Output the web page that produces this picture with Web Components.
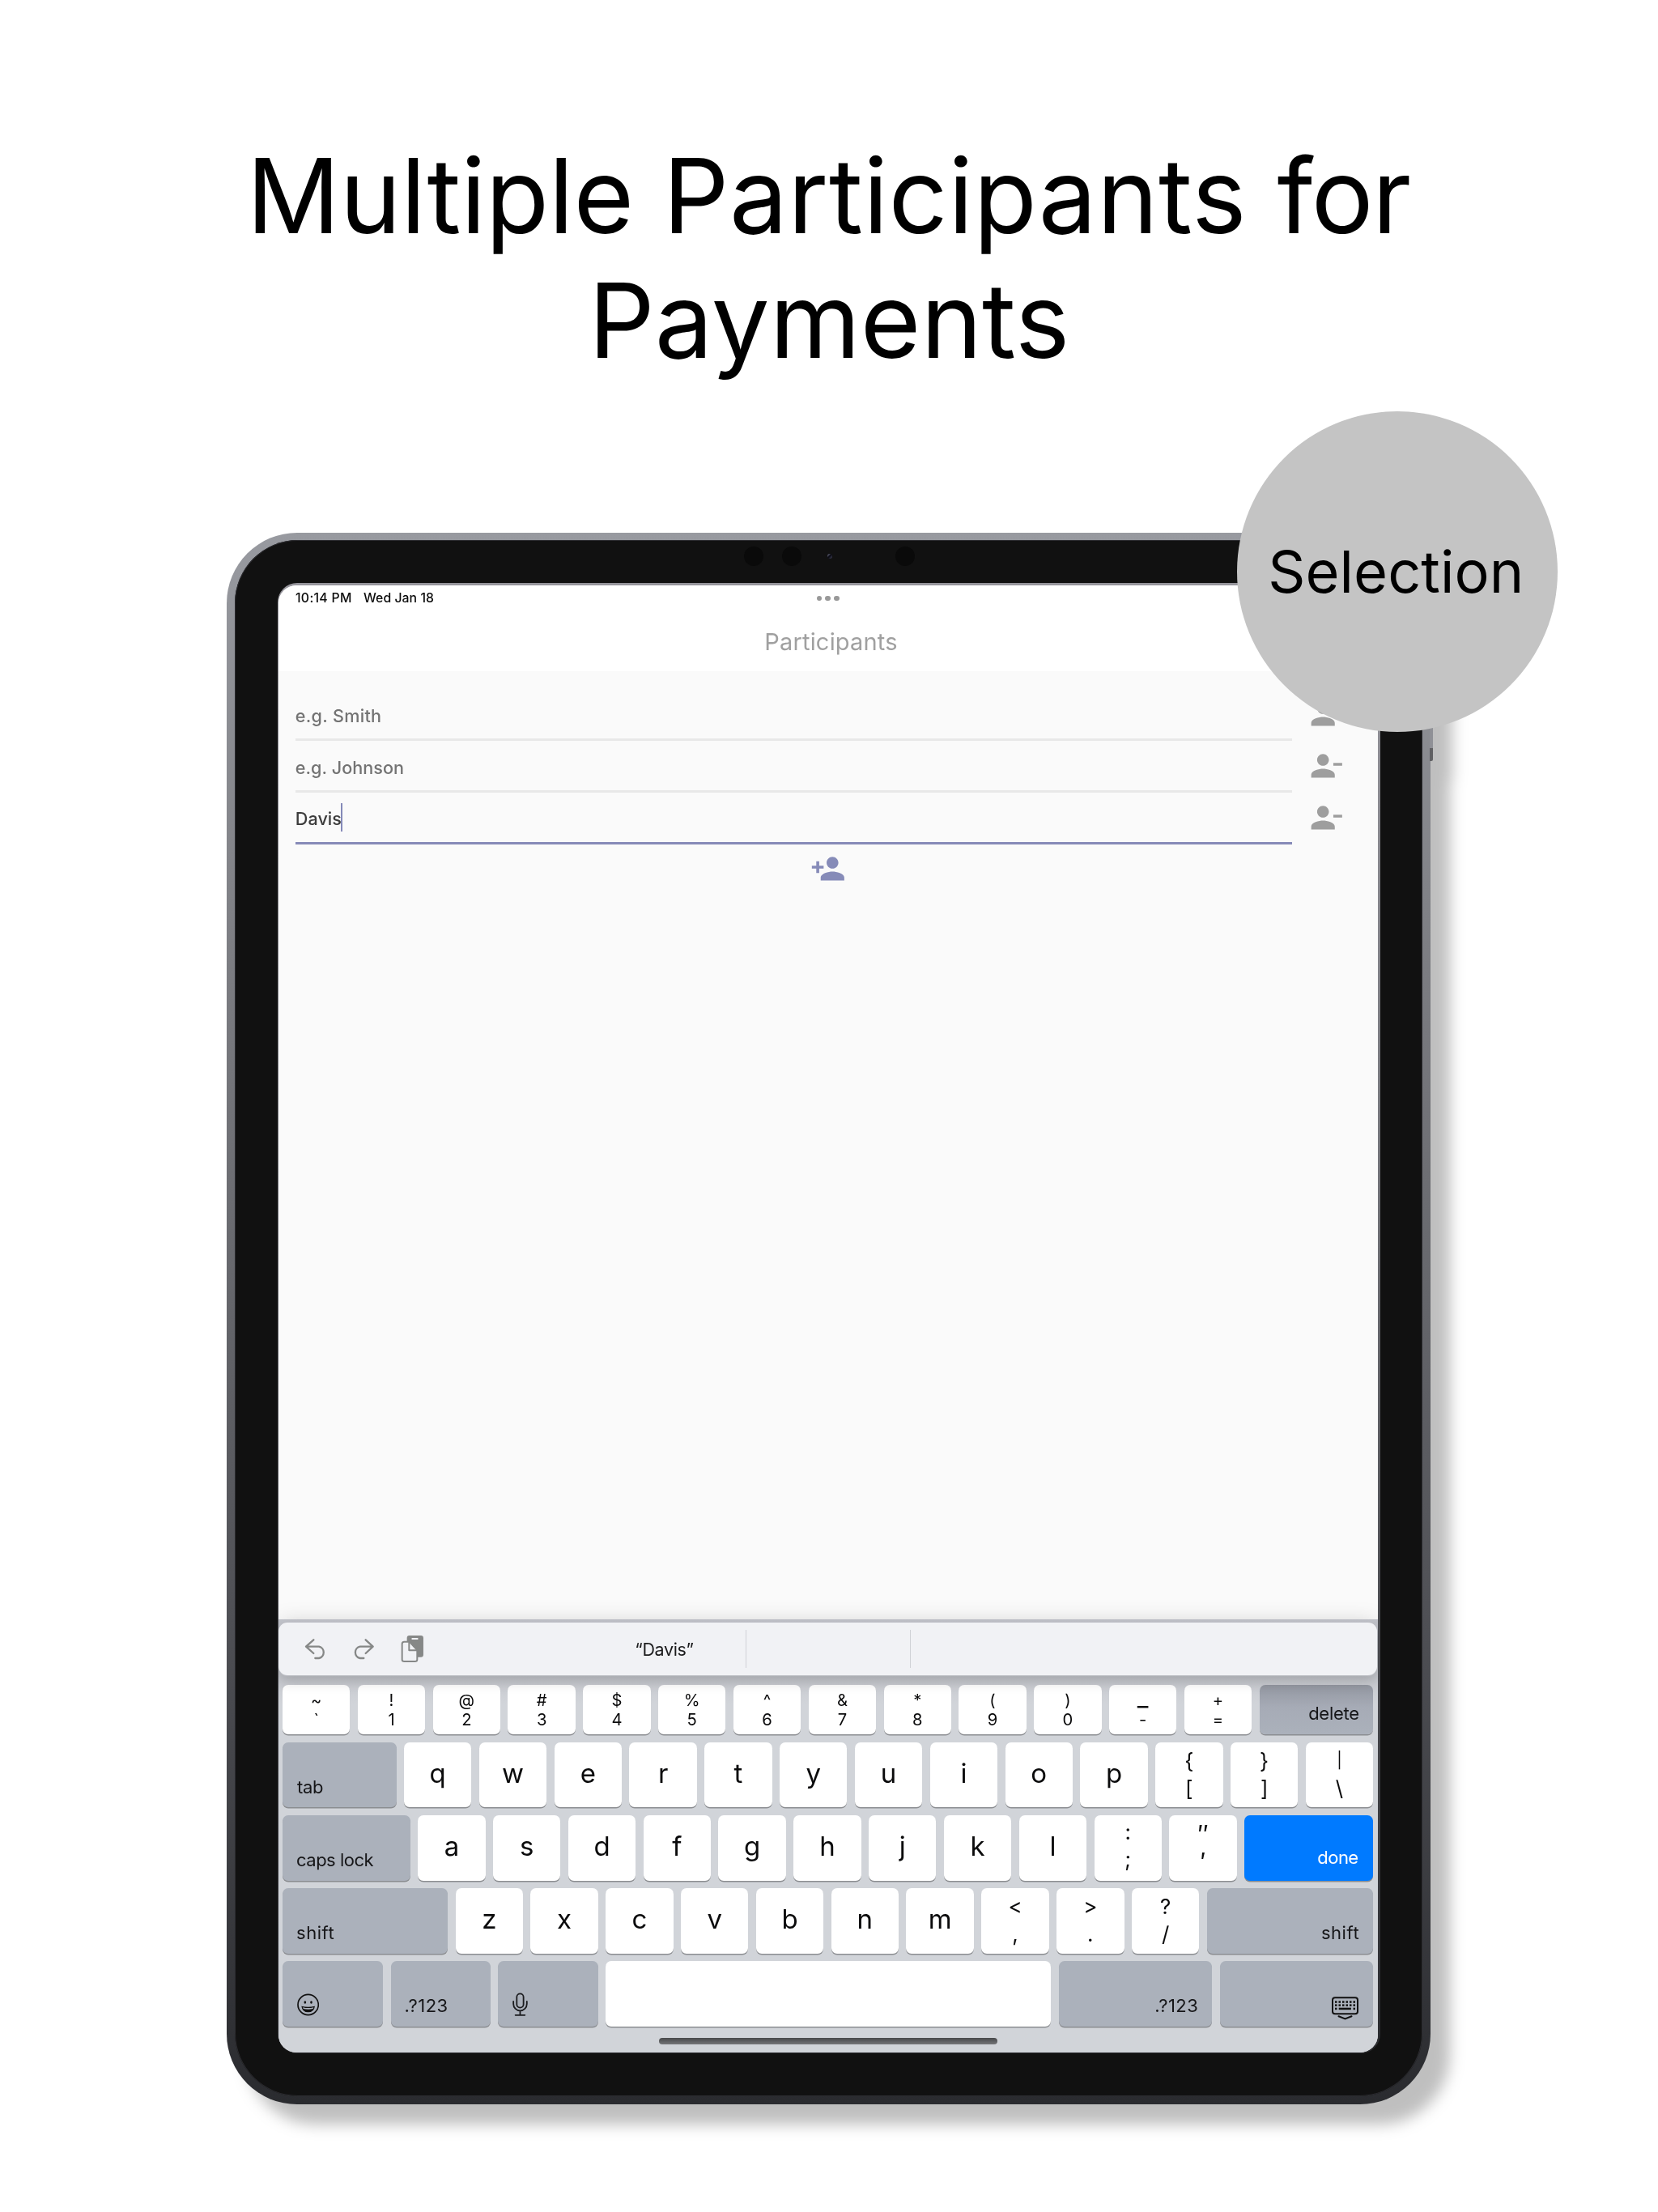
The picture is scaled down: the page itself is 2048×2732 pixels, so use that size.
<!DOCTYPE html>
<html lang="en">
<head>
<meta charset="utf-8">
<title>Multiple Participants for Payments</title>
<style>
html, body { margin: 0; padding: 0; background: #fff; }
body { width: 2048px; height: 2732px; overflow: hidden; font-family: Inter, "Liberation Sans", sans-serif; color: #000; }
</style>
</head>
<body>
<promo-page>
  <promo-title slot="title"></promo-title>
  <tablet-frame>
    <participants-screen></participants-screen>
  </tablet-frame>
  <round-badge slot="badge">Selection</round-badge>
</promo-page>

<script>
const define = (name, html, setup) => customElements.define(name, class extends HTMLElement {
  constructor() {
    super();
    this.attachShadow({ mode: 'open' }).innerHTML = html;
    if (setup) setup(this, this.shadowRoot);
  }
});

define('promo-page', `
  <style>
    :host { display: flex; flex-direction: column; width: 2048px; height: 2732px; position: relative; background: #fff; overflow: hidden; }
    .stage { padding-left: 280px; }
  </style>
  <slot name="title"></slot>
  <div class="stage"><slot></slot></div>
  <slot name="badge"></slot>
`);

define('promo-title', `
  <style>
    :host { display: flex; flex-direction: column; box-sizing: border-box; height: 658px; padding-top: 165px; font-size: 128px; line-height: 154px; white-space: nowrap; }
    .first { padding-left: 304.4px; }
    .second { padding-left: 727px; }
  </style>
  <div class="first"><span style="letter-spacing:-.33px">Multiple</span> <span style="letter-spacing:.42px">Participants</span> <span style="letter-spacing:-1.5px;margin-left:1.6px">for</span></div>
  <div class="second">Payments</div>
`);

define('round-badge', `
  <style>
    :host { position: absolute; left: 1528px; top: 508px; width: 396px; height: 396px; border-radius: 50%; background: #c4c4c4;
      display: flex; align-items: center; justify-content: center; font-size: 72px; line-height: 396px; }
    text-run { position: relative; left: -2.5px; }
  </style>
  <text-run ink="306.5">Selection</text-run>
`);

define('tablet-frame', `
  <style>
    :host { --metal: linear-gradient(180deg, #989aa0 0%, #828388 22%, #4e4f54 70%, #2a2b2f 100%);
      display: block; position: relative; box-sizing: border-box; width: 1487px; height: 1941px; padding: 9px 10px 10px 9.5px;
      border-radius: 87px; background: var(--metal); filter: drop-shadow(24px 25px 9px rgba(0,0,0,.25)); }
    .bezel { box-sizing: border-box; height: 1922px; border-radius: 78px; background: #111; padding: 53px 52px 0 53.5px;
      box-shadow: inset 0 0 0 1px #2c2c30; position: relative; }
    .glass { box-sizing: border-box; height: 1816px; border-radius: 24px; padding: 3px 3px 1px .5px;
      background: linear-gradient(180deg, #96959c, #77787e 35%, #45464b 75%, #2a2b2f); }
    .panel { height: 1812px; border-radius: 22px; overflow: hidden; background: #fafafa; display: flex; flex-direction: column; }
    .lens { position: absolute; top: 8px; width: 24px; height: 24px; border-radius: 50%; background: #0a0a0a; }
    .dot { position: absolute; top: 17px; left: 732px; width: 6px; height: 6px; border-radius: 50%; background: linear-gradient(135deg, #55566a 20%, #05050d 45%, #4a4b66); }
    .btn { position: absolute; left: 1486px; top: 160px; width: 4px; height: 122px; border-radius: 0 2px 2px 0; background: linear-gradient(#8f9096 0 106px, #606063 106px); }
  </style>
  <div class="btn"></div>
  <div class="bezel">
    <i class="lens" style="left:629.5px"></i><i class="lens" style="left:676.5px"></i><i class="lens" style="left:816.5px"></i><i class="dot"></i>
    <div class="glass"><div class="panel"><slot></slot></div></div>
  </div>
`);

define('participants-screen', `
  <style>
    :host { display: flex; flex-direction: column; height: 1812px; }
    header { background: #fff; height: 106px; }
    .status { display: grid; grid-template-columns: 1fr auto 1fr; height: 31px; line-height: 31px; font-size: 15.8px; font-weight: 500; color: #0a0a0a; }
    .clock { display: flex; gap: 15px; padding-left: 21.5px; }
    .dots { display: flex; gap: 4px; padding-top: 12.5px; }
    .dots i { width: 6.8px; height: 6.8px; border-radius: 50%; background: #999; }
    .title { display: flex; justify-content: center; font-size: 29px; line-height: 77px; color: #a0a0a0; padding-left: 8px; }
    .form { padding: 22px 0 0 21.5px; }
    .add { display: flex; justify-content: center; padding-top: 8px; }
    svg { width: 43.7px; height: 43.7px; display: block; fill: #868bb8; }
    .fill { flex: 1; }
  </style>
  <header>
    <div class="status">
      <div class="clock"><text-run ink="69">10:14 PM</text-run><text-run ink="87">Wed Jan 18</text-run></div>
      <div class="dots"><i></i><i></i><i></i></div><span></span>
    </div>
    <div class="title"><text-run ink="161">Participants</text-run></div>
  </header>
  <div class="form">
    <name-field><text-run ink="104.5">e.g. Smith</text-run></name-field>
    <name-field><text-run ink="132.5">e.g. Johnson</text-run></name-field>
    <name-field active><text-run ink="55.5">Davis</text-run></name-field>
  </div>
  <div class="add"><svg viewBox="0 0 24 24"><path d="M15 12c2.21 0 4-1.79 4-4s-1.79-4-4-4-4 1.79-4 4 1.79 4 4 4zm-9-2V7H4v3H1v2h3v3h2v-3h3v-2H6zm9 4c-2.67 0-8 1.34-8 4v2h16v-2c0-2.66-5.33-4-8-4z"/></svg></div>
  <div class="fill"></div>
  <tablet-keyboard></tablet-keyboard>
`);

define('name-field', `
  <style>
    :host { display: flex; height: 64px; gap: 20.5px; }
    .box { box-sizing: border-box; width: 1231px; height: 64px; border-bottom: 3px solid #e8e8e8; display: flex; padding-left: .8px;
      font-size: 21.6px; font-weight: 500; line-height: 66.5px; color: #737373; }
    :host([active]) .box { border-color: #868ab8; color: #3c3c3c; line-height: 65px; }
    .caret { display: none; width: 2px; height: 35px; margin: 13px 0 0 -.5px; background: #8489b8; }
    :host([active]) .caret { display: block; }
    svg { width: 43.7px; height: 43.7px; margin: 8.6px 0 0 -.6px; fill: #9e9e9e; }
  </style>
  <div class="box"><slot></slot><span class="caret"></span></div>
  <svg viewBox="0 0 24 24"><path d="M14 8c0-2.21-1.79-4-4-4S6 5.79 6 8s1.79 4 4 4 4-1.79 4-4zm3 2v2h6v-2h-6zM2 18v2h16v-2c0-2.66-5.33-4-8-4s-8 1.34-8 4z"/></svg>
`);

define('suggestion-bar', `
  <style>
    :host { display: flex; box-sizing: border-box; height: 65px; margin: 0 1px 0 .5px; padding-left: 31px; border-radius: 11px; background: #f1f2f5;
      box-shadow: 0 1px 1px #c3c5ca, 0 8px 16px rgba(0,0,0,.17); font-size: 21.5px; line-height: 66px; color: #1b1b1c; position: relative; }
    svg { display: block; fill: none; stroke: #868887; stroke-width: 7; stroke-linecap: round; stroke-linejoin: round; flex: none; }
    i { width: 1px; height: 47px; margin-top: 9px; background: #d0d2d6; }
  </style>
  <svg style="margin-top:17.7px" width="30" height="30" viewBox="105 95 90 90"><path d="M142 105 114 130 142 155M116 130H162A22 22 0 0 1 162 173H148"/></svg>
  <svg style="margin:17.7px 0 0 29.3px" width="30" height="30" viewBox="283 95 90 90"><path d="M336 105 363 130 336 155M362 130H315A22 22 0 0 0 315 173H329"/></svg>
  <svg style="margin:14.3px 0 0 29.7px" width="31.3" height="36" viewBox="462 85 94 108">
    <rect x="488" y="91" width="61" height="80" rx="9" fill="#868887" stroke="none"/><path d="M508 103H527" stroke="#f1f2f5" stroke-width="6"/>
    <path d="M478 114H497L526 145V180Q526 187 518 187H478Q470 187 470 180V122Q470 114 478 114Z" fill="#f1f2f5" stroke-width="6"/><path d="M496 117V146H524" stroke-width="6"/>
  </svg>
  <text-run ink="71.2" style="margin-left:260px">“Davis”</text-run>
  <i style="margin-left:64.5px"></i><i style="margin-left:202px"></i>
`);

define('kb-key', `
  <style>
    :host { display: flex; flex-direction: column; align-items: center; box-sizing: border-box; flex: none; width: 83.4px; height: 100%;
      border-radius: 7px; background: #fff; box-shadow: 0 1.6px 0 #8b8d91; color: #0b0b0c; font-size: 33px; line-height: 76px; white-space: pre; }
    :host([kind=num]) { font-size: 20.2px; line-height: 24.4px; padding-top: 6.8px; }
    :host([kind=pair]) { font-size: 26px; line-height: 34px; padding-top: 6px; }
    :host([kind=mod]) { background: #abb1bb; align-items: flex-start; font-size: 22px; line-height: 26px; padding: 42px 18px 0; color: #161618; }
    :host([side=right]) { align-items: flex-end !important; }
    :host([tone=shade]) { background: linear-gradient(#9397a1, #a6abb6 45%, #abb1bb); padding-top: 22px; }
    :host([tone=blue]) { background: #007aff; color: #fff; padding-top: 39px; padding-right: 19px; }
    :host([icon]) { padding-top: 0; }
  </style>
  <slot></slot>
`);

const emoji = `<svg style="display:block;margin-top:39.3px" width="27.3" height="28" viewBox="80 124 82 84"><circle cx="121" cy="166" r="38" fill="none" stroke="#111" stroke-width="5"/><ellipse cx="109.5" cy="157" rx="4" ry="5.5" fill="#111"/><ellipse cx="132.5" cy="157" rx="4" ry="5.5" fill="#111"/><path d="M96 171Q121 178 146 171Q143 194 121 194T96 171Z" fill="#111"/><path d="M101 175.5Q121 181 141 175.5L139 181Q121 185 103 181Z" fill="#abb1bb"/></svg>`;
const mic = `<svg style="display:block;margin:37.3px 0 0 -1px" width="21.3" height="30.7" viewBox="878 118 64 92" fill="none" stroke="#1b1c1f" stroke-width="5.5" stroke-linecap="round"><rect x="897" y="125" width="25" height="52" rx="12.5"/><path d="M884.500 154V163A25 25 0 0 0 934.500 163V154M909.500 189V204M892 204.500H927"/></svg>`;
const dots = y => [0,1,2,3,4,5].map(i => `<rect x="${4 + i * 4.5}" y="${y}" width="2.5" height="2.5"/>`).join('');
const board = `<svg style="display:block;margin:43.5px 0 0" width="33" height="29" viewBox="0 0 33 29" fill="#111"><rect x="1" y="1.2" width="31" height="20" rx="3" fill="none" stroke="#111" stroke-width="2"/>${dots(5.3)}${dots(9.4)}<rect x="4" y="13.7" width="2.5" height="2.5"/><rect x="8.7" y="13.7" width="15.2" height="2.5"/><rect x="26.5" y="13.7" width="2.5" height="2.5"/><path d="M8.5 24.3 16.5 27.5 24.5 24.3" fill="none" stroke="#111" stroke-width="2" stroke-linecap="round"/></svg>`;

/* Optical corrections for punctuation caps. */
const tweak = {
  '_': 'font-size:30px;position:relative;top:-3.5px',
  '|': 'font-size:19.5px;position:relative;top:-1px',
  ':': 'position:relative;top:-1.5px',
  ';': 'position:relative;top:-2.5px',
  '″': 'font-size:30px',
  '′': 'font-size:30px'
};
const esc = s => s.replace(/&/g, '&amp;').replace(/</g, '&lt;');
const cap = c => `<span style="${tweak[c] || ''}">${esc(c)}</span>`;
const letters = s => [...s].map(c => `<kb-key>${c}</kb-key>`).join('');
const pairs = (kind, list) => list.map(([a, b]) => `<kb-key kind="${kind}">${cap(a)}${cap(b)}</kb-key>`).join('');
const mod = (width, ink, label, extra = '') => `<kb-key kind="mod" ${extra} style="width:${width}px"><text-run ink="${ink}">${label}</text-run></kb-key>`;
const iconKey = (width, svg, extra = '') => `<kb-key kind="mod" icon ${extra} style="width:${width}px">${svg}</kb-key>`;

define('tablet-keyboard', `
  <style>
    :host { display: block; box-sizing: border-box; height: 535px; padding-top: 4px; background: linear-gradient(#bfc1c8 0, #c6c8ce 70px, #d1d4d9 105px);
      box-shadow: 0 2px 26px -3px rgba(0,0,0,.18); }
    .rows { display: flex; flex-direction: column; gap: 9.4px; padding: 12px 5.5px 0; }
    .row { display: flex; gap: 9.43px; height: 80.8px; }
    .row:first-child { height: 61.3px; }
    .home { width: 417.5px; height: 8px; margin: 14.3px auto 0; border-radius: 4px; background: linear-gradient(#47484a, #747578); }
  </style>
  <suggestion-bar></suggestion-bar>
  <div class="rows">
    <div class="row">${pairs('num', [['~','\`'],['!','1'],['@','2'],['#','3'],['$','4'],['%','5'],['^','6'],['&','7'],['*','8'],['(','9'],[')','0'],['_','-'],['+','=']])}${mod(140.6, 61, 'delete', 'side="right" tone="shade"')}</div>
    <div class="row">${mod(140.6, 32, 'tab')}${letters('qwertyuiop')}${pairs('pair', [['{','['],['}',']'],['|','\\']])}</div>
    <div class="row">${mod(157.8, 94.5, 'caps lock')}${letters('asdfghjkl')}${pairs('pair', [[':',';'],['″','′']])}${mod(159.2, 49, 'done', 'side="right" tone="blue"')}</div>
    <div class="row">${mod(204.2, 45.5, 'shift')}${letters('zxcvbnm')}${pairs('pair', [['<',','],['>','.'],['?','/']])}${mod(205.7, 45.5, 'shift', 'side="right"')}</div>
    <div class="row">${iconKey(124.2, emoji)}${mod(123.4, 52, '.?123')}${iconKey(123.4, mic)}<kb-key style="width:550px"></kb-key>${mod(189.6, 52, '.?123', 'side="right"')}${iconKey(189.6, board, 'side="right"')}</div>
  </div>
  <div class="home"></div>
`);

/* A text run whose box hugs its ink and whose tracking is set so that the ink spans the given width. */
const pen = document.createElement('canvas').getContext('2d');
customElements.define('text-run', class extends HTMLElement {
  constructor() {
    super();
    this.attachShadow({ mode: 'open' }).innerHTML = '<style>:host{display:block;white-space:pre;flex:none} span{display:block}</style><span><slot></slot></span>';
  }
  connectedCallback() {
    const cs = getComputedStyle(this), text = this.textContent;
    pen.font = `${cs.fontWeight} ${cs.fontSize} ${cs.fontFamily}`;
    const m = pen.measureText(text), left = -m.actualBoundingBoxLeft, right = m.actualBoundingBoxRight;
    const ink = +this.getAttribute('ink'), track = (ink - (right - left)) / (text.length - 1);
    const span = this.shadowRoot.querySelector('span');
    span.style.letterSpacing = track + 'px';
    span.style.marginLeft = -left + 'px';
    this.style.width = ink + 'px';
  }
});
</script>
</body>
</html>
